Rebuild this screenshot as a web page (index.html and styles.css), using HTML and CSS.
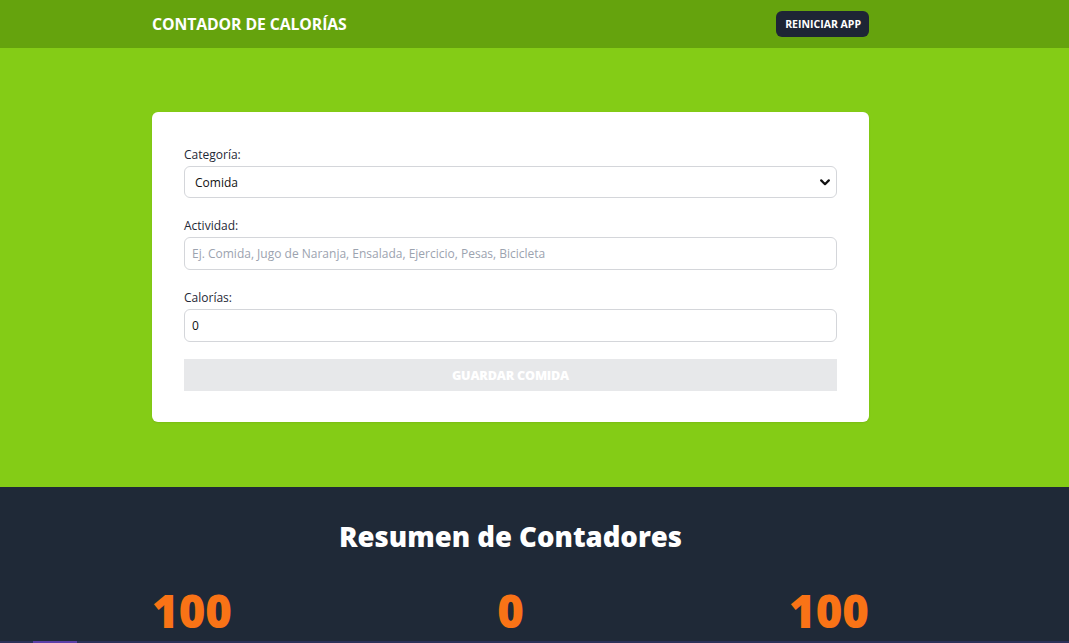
FILE: index.html
```html
<!DOCTYPE html>
<html lang="es">
<head>
<meta charset="utf-8">
<title>Contador de Calorías</title>
<link rel="stylesheet" href="styles.css">
</head>
<body>
<header class="topbar">
  <div class="frame">
    <div class="container bar-inner">
      <h1 class="brand">CONTADOR DE CALORÍAS</h1>
      <button class="reset-btn" type="button">REINICIAR APP</button>
    </div>
  </div>
</header>

<section class="form-section">
  <div class="frame">
    <form class="container card">
      <div class="field">
        <label class="label" for="categoria">Categoría:</label>
        <div class="select-wrap">
          <select id="categoria" class="control select">
            <option>Comida</option>
            <option>Ejercicio</option>
          </select>
          <svg class="chev" width="10" height="7" viewBox="0 0 10 7"><path d="M1.2 1.4 L5 5.2 L8.8 1.4" fill="none" stroke="#111" stroke-width="2.2" stroke-linecap="round" stroke-linejoin="round"/></svg>
        </div>
      </div>
      <div class="field">
        <label class="label" for="actividad">Actividad:</label>
        <input id="actividad" class="control input" type="text" placeholder="Ej. Comida, Jugo de Naranja, Ensalada, Ejercicio, Pesas, Bicicleta">
      </div>
      <div class="field">
        <label class="label" for="calorias">Calorías:</label>
        <input id="calorias" class="control input" type="number" value="0">
      </div>
      <button class="save-btn" type="button" disabled>GUARDAR COMIDA</button>
    </form>
  </div>
</section>

<section class="summary">
  <div class="frame">
    <div class="container">
      <h2 class="summary-title">Resumen de Contadores</h2>
      <div class="counters">
        <span class="count">100</span>
        <span class="count">0</span>
        <span class="count">100</span>
      </div>
    </div>
  </div>
  <div class="edge"><span class="edge-tab"></span></div>
</section>
</body>
</html>
```

FILE: styles.css
```css
* { box-sizing: border-box; }
html, body { margin: 0; padding: 0; }
body {
  font-family: "Open Sans", "Noto Sans", sans-serif;
  color: #1f2937;
  background: #1f2937;
  overflow: hidden;
  height: 643px;
}
.frame { width: 1021px; }
.container { width: 717px; margin: 0 auto; }

.topbar { background: #65a30d; height: 48px; }
.bar-inner {
  height: 48px;
  display: flex;
  align-items: center;
  justify-content: space-between;
}
.brand {
  margin: 0;
  color: #fff;
  font-size: 15.8px;
  font-weight: 700;
  letter-spacing: -0.1px;
}
.reset-btn {
  background: #1e2535;
  color: #fff;
  border: 0;
  border-radius: 6px;
  font-family: inherit;
  font-size: 10.5px;
  font-weight: 700;
  height: 26px;
  padding: 0 8px 0 9px;
  margin-top: -1px;
}

.form-section { background: #84cc16; padding: 64px 0 65px; }
.card {
  display: block;
  background: #fff;
  border-radius: 6px;
  padding: 32px 32px 31px;
  box-shadow: 0 1px 2px rgba(0,0,0,0.08);
}
.field { display: flex; flex-direction: column; margin-bottom: 17px; }
.label {
  font-size: 12px;
  line-height: 18px;
  padding-top: 2px;
  margin-bottom: 2px;
  color: #1f2937;
}
.control {
  width: 100%;
  border: 1px solid #d4d6da;
  border-radius: 6px;
  background: #fff;
  font-family: inherit;
  font-size: 12px;
  color: #111;
  outline: none;
}
.select-wrap { position: relative; }
.select {
  appearance: none;
  -webkit-appearance: none;
  height: 32px;
  padding: 0 10px;
  display: block;
}
.chev { position: absolute; right: 7px; top: 13px; }
.input { height: 33px; padding: 0 7px; display: block; }
.input::placeholder { color: #9ca3af; }
.input::-webkit-outer-spin-button,
.input::-webkit-inner-spin-button { -webkit-appearance: none; margin: 0; }
.save-btn {
  width: 100%;
  height: 32px;
  border: 0;
  background: #e7e8ea;
  color: #fff;
  font-family: inherit;
  font-size: 12.6px;
  font-weight: 800;
  letter-spacing: -0.2px;
  padding: 0;
}

.summary { background: #1f2937; padding-top: 32px; height: 156px; position: relative; }
.summary-title {
  margin: 0;
  text-align: center;
  color: #fff;
  font-size: 27.5px;
  line-height: 36px;
  font-weight: 800;
}
.counters {
  display: flex;
  justify-content: space-between;
  margin-top: 27px;
}
.count {
  color: #f97316;
  font-size: 45.5px;
  line-height: 56px;
  font-weight: 800;
}
.edge {
  position: absolute;
  left: 0; right: 0; bottom: 0;
  height: 2px;
  background: #2b3159;
}
.edge-tab {
  position: absolute;
  left: 33px; width: 44px; top: 0; bottom: 0;
  background: #5b3fa8;
}
```
